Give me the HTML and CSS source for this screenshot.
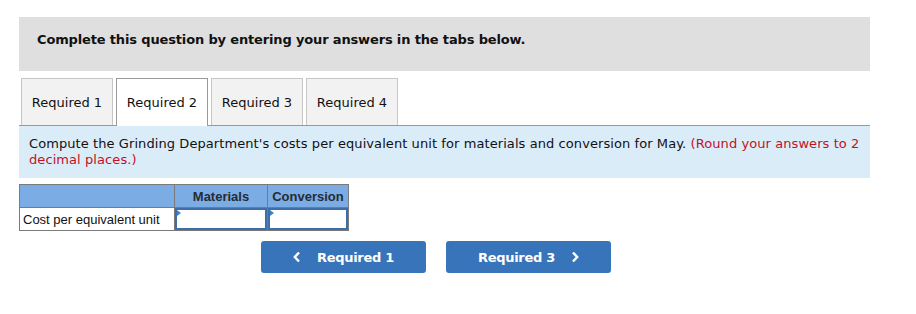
FILE: index.html
```html
<!DOCTYPE html>
<html lang="en">

<head>
    <meta charset="UTF-8">
    <meta name="viewport" content="width=device-width, initial-scale=1.0">
    <title>Required 2</title>
    <link rel="stylesheet" href="styles.css">
</head>

<body>
    <div class="question">
        <div class="intro">Complete this question by entering your answers in the tabs below.</div>

        <div class="tabs">
            <div class="tab">Required 1</div>
            <div class="tab active">Required 2</div>
            <div class="tab">Required 3</div>
            <div class="tab">Required 4</div>
        </div>

        <div class="prompt">
            Compute the Grinding Department's costs per equivalent unit for materials and conversion for May.
            <span class="note">(Round your answers to 2 decimal places.)</span>
        </div>

        <table class="answer-table">
            <tr>
                <th class="label-col"></th>
                <th class="mat-col">Materials</th>
                <th class="conv-col">Conversion</th>
            </tr>
            <tr>
                <td class="row-label">Cost per equivalent unit</td>
                <td class="input-cell"><input type="text"></td>
                <td class="input-cell"><input type="text"></td>
            </tr>
        </table>

        <div class="nav">
            <button class="nav-btn">
                <svg width="8" height="12" viewBox="0 0 8 12"><polyline points="6,1.5 1.8,6 6,10.5" fill="none" stroke="#fff" stroke-width="2.4"/></svg>
                <span>Required 1</span>
            </button>
            <button class="nav-btn">
                <span>Required 3</span>
                <svg width="8" height="12" viewBox="0 0 8 12"><polyline points="2,1.5 6.2,6 2,10.5" fill="none" stroke="#fff" stroke-width="2.4"/></svg>
            </button>
        </div>
    </div>
</body>

</html>
```

FILE: styles.css
```css
body {
    margin: 0;
    padding: 17px 0 0 19px;
    font-family: "DejaVu Sans", Verdana, sans-serif;
    font-size: 13px;
    color: #111;
    background: white;
}

.question {
    width: 851px;
}

.intro {
    height: 54px;
    box-sizing: border-box;
    padding: 15px 18px 0;
    background-color: #dfdfdf;
    font-weight: bold;
    font-size: 13px;
    letter-spacing: -0.15px;
}

.tabs {
    display: flex;
    gap: 3px;
    margin-top: 7px;
    padding-left: 2px;
    border-bottom: 1px solid #9a9a9a;
}

.tab {
    width: 90px;
    height: 46px;
    display: flex;
    align-items: center;
    justify-content: center;
    background-color: #f2f2f2;
    border: 1px solid #c6c6c6;
    border-bottom: none;
}

.tab.active {
    background-color: white;
    border-color: #9a9a9a;
    height: 47px;
    margin-bottom: -1px;
}

.prompt {
    padding: 10px 10px;
    background-color: #dbecf9;
    line-height: 16px;
    letter-spacing: 0.08px;
}

.note {
    color: #c0121e;
}

.answer-table {
    margin-top: 6px;
    border-collapse: collapse;
    font-family: "Liberation Sans", Arial, sans-serif;
    font-size: 13px;
}

.answer-table th,
.answer-table td {
    border: 1px solid #7a7a7a;
    height: 22px;
    padding: 0;
}

.answer-table th {
    background-color: #7badE4;
    color: #262b33;
    font-size: 13px;
    text-align: center;
}

.label-col {
    width: 154px;
}

.mat-col {
    width: 92px;
}

.conv-col {
    width: 80px;
}

.row-label {
    padding: 0 0 0 3px !important;
    color: #111;
}

.input-cell {
    position: relative;
}

.input-cell input {
    display: block;
    width: 100%;
    height: 22px;
    box-sizing: border-box;
    border: 2px solid #3d6ea9;
    margin: 0;
    padding: 0 3px;
    background: white;
}

.input-cell::before {
    content: "";
    position: absolute;
    left: 2px;
    top: 2px;
    border-top: 3px solid transparent;
    border-bottom: 3px solid transparent;
    border-left: 4px solid #3b82d6;
}

.nav {
    display: flex;
    gap: 20px;
    margin-top: 10px;
    padding-left: 242px;
}

.nav-btn {
    width: 165px;
    height: 32px;
    display: flex;
    align-items: center;
    justify-content: center;
    gap: 16px;
    background-color: #3874b9;
    color: white;
    border: none;
    border-radius: 3px;
    font-family: "DejaVu Sans", Verdana, sans-serif;
    font-weight: bold;
    font-size: 13px;
    letter-spacing: -0.3px;
    cursor: pointer;
}
```
